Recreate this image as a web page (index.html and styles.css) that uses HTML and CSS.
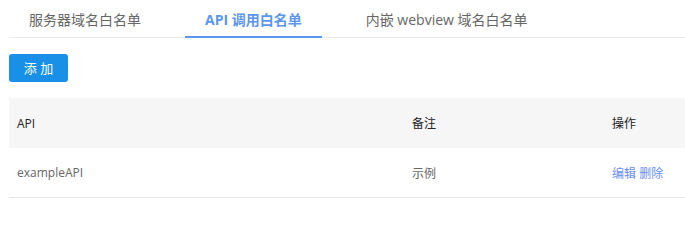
FILE: index.html
```html
<!DOCTYPE html>
<html lang="zh">
<head>
<meta charset="utf-8">
<link rel="stylesheet" href="styles.css">
</head>
<body>
<div class="page">
  <div class="tabs">
    <div class="tab">服务器域名白名单</div>
    <div class="tab active">API 调用白名单</div>
    <div class="tab">内嵌 webview 域名白名单</div>
  </div>
  <div class="toolbar">
    <button class="btn">添 加</button>
  </div>
  <div class="table">
    <div class="row head">
      <div class="cell c1">API</div>
      <div class="cell c2">备注</div>
      <div class="cell c3">操作</div>
    </div>
    <div class="row body">
      <div class="cell c1">exampleAPI</div>
      <div class="cell c2">示例</div>
      <div class="cell c3"><a class="link">编辑</a> <a class="link">删除</a></div>
    </div>
  </div>
</div>
</body>
</html>
```
FILE: styles.css
```css
html, body {
  margin: 0;
  padding: 0;
  background: #fff;
}
body {
  font-family: "Open Sans", "Noto Sans CJK SC", sans-serif;
  color: #333;
}
.page {
  padding-left: 9px;
  width: 680px;
}
.tabs {
  display: flex;
  gap: 24px;
  border-bottom: 1px solid #ebebeb;
  height: 37px;
}
.tab {
  position: relative;
  padding: 9px 20px 0;
  font-size: 14px;
  line-height: 22px;
  color: #666;
}
.tab.active {
  color: #5b96ef;
  font-weight: bold;
}
.tab.active::after {
  content: "";
  position: absolute;
  left: 0;
  right: 0;
  bottom: -1px;
  height: 2px;
  background: #5b96ef;
}
.toolbar {
  padding: 16px 0;
}
.btn {
  display: block;
  width: 59px;
  height: 28px;
  padding: 0;
  border: none;
  border-radius: 3px;
  background: #1890e8;
  color: #fff;
  font-family: "Open Sans", "Noto Sans CJK SC", sans-serif;
  font-size: 13px;
  line-height: 28px;
}
.table {
  font-size: 12px;
}
.row {
  display: flex;
  align-items: center;
}
.row.head {
  height: 50px;
  background: #f6f6f6;
  color: #222;
}
.row.body {
  height: 49px;
  border-bottom: 1px solid #e8e8e8;
  color: #666;
}
.cell {
  padding-left: 8px;
  box-sizing: border-box;
}
.c1 { width: 395px; }
.c2 { width: 200px; }
.c3 { flex: 1; }
.link {
  color: #6a8ef2;
  text-decoration: none;
}
```
